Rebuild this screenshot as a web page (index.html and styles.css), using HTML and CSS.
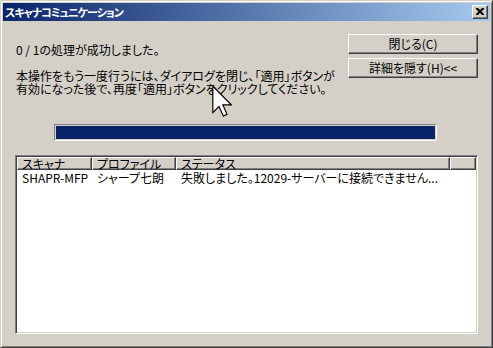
FILE: index.html
```html
<!DOCTYPE html>
<html lang="ja">
<head>
<meta charset="utf-8">
<link rel="stylesheet" href="styles.css">
</head>
<body>
<div class="window">
  <div class="titlebar">
    <span class="title">スキャナコミュニケーション</span>
    <span class="closebtn"><svg width="8" height="7" viewBox="0 0 8 7"><path d="M0 0h2l2 2 2-2h2v1l-2.5 2.5L8 6v1H6L4 5 2 7H0V6l2.5-2.5L0 1z" fill="#000"/></svg></span>
  </div>
  <div class="body">
    <div class="top">
      <div class="message">
        <p class="line first">0 / 1の処理が成功しました。</p>
        <p class="line">本操作をもう一度行うには、ダイアログを閉じ、「適用」ボタンが<br>有効になった後で、再度「適用」ボタンをクリックしてください。</p>
      </div>
      <div class="buttons">
        <div class="btn">閉じる(C)</div>
        <div class="btn">詳細を隠す(H)&lt;&lt;</div>
      </div>
    </div>
    <div class="progress"><div class="fill"></div></div>
    <div class="list">
      <div class="header">
        <div class="hcell c1">スキャナ</div>
        <div class="hcell c2">プロファイル</div>
        <div class="hcell c3">ステータス</div>
        <div class="hcell c4"></div>
      </div>
      <div class="row">
        <div class="cell c1">SHAPR-MFP</div>
        <div class="cell c2">シャープ七朗</div>
        <div class="cell c3">失敗しました。12029-サーバーに接続できません...</div>
      </div>
    </div>
  </div>
  <svg class="cursor" width="20" height="32" viewBox="0 0 12 19"><path d="M0.5 0.5V16.5L4.2 12.8L6.8 18.5L9 17.5L6.5 11.8H11.5Z" fill="#fff" stroke="#000" stroke-width="0.7" stroke-linejoin="miter"/></svg>
</div>
</body>
</html>
```
FILE: styles.css
```css
html, body {
  margin: 0;
  padding: 0;
  background: #d4d0c8;
}
body {
  font-family: "Noto Sans CJK JP", "Noto Sans", sans-serif;
  font-size: 12px;
  color: #000;
  font-feature-settings: "palt";
}
.window {
  position: relative;
  width: 493px;
  height: 348px;
  box-sizing: border-box;
  border: 1px solid;
  border-color: #d4d0c8 #404040 #404040 #d4d0c8;
  box-shadow: inset 1px 1px #fff, inset -1px -1px #808080;
  padding: 2px;
  display: flex;
  flex-direction: column;
  overflow: hidden;
}
.titlebar {
  height: 18px;
  flex: none;
  background: linear-gradient(to right, #0a246a, #a6caf0);
  display: flex;
  align-items: center;
  justify-content: space-between;
  padding: 0 2px 0 2px;
}
.title {
  color: #fff;
  font-weight: bold;
  font-size: 11px;
  letter-spacing: -1px;
  line-height: 18px;
  white-space: nowrap;
}
.closebtn {
  width: 16px;
  height: 14px;
  box-sizing: border-box;
  border: 1px solid;
  border-color: #fff #404040 #404040 #fff;
  box-shadow: inset -1px -1px #808080;
  background: #d4d0c8;
  display: flex;
  align-items: center;
  justify-content: center;
}
.closebtn svg { display: block; margin: 0 1px 1px 0; }
.body {
  flex: 1;
  display: flex;
  flex-direction: column;
  padding: 0 12px 11px 12px;
  min-height: 0;
}
.top {
  display: flex;
  justify-content: space-between;
  align-items: flex-start;
}
.message {
  padding: 22px 0 0 1px;
}
.line {
  margin: 0;
  line-height: 13px;
  white-space: nowrap;
}
.line.first {
  margin-bottom: 13px;
}
.buttons {
  margin-top: 13px;
  display: flex;
  flex-direction: column;
  gap: 4px;
}
.btn {
  width: 130px;
  height: 20px;
  box-sizing: border-box;
  border: 1px solid;
  border-color: #fff #404040 #404040 #fff;
  box-shadow: inset -1px -1px #808080;
  display: flex;
  align-items: center;
  justify-content: center;
  line-height: 1;
  white-space: nowrap;
}
.progress {
  margin: 29px 0 0 39px;
  width: 383px;
  height: 17px;
  box-sizing: border-box;
  border: 1px solid;
  border-color: #808080 #fff #fff #808080;
  padding: 1px;
}
.fill {
  height: 100%;
  background: #0a246a;
}
.list {
  margin-top: 14px;
  flex: 1;
  box-sizing: border-box;
  border: 1px solid;
  border-color: #808080 #fff #fff #808080;
  box-shadow: inset 1px 1px #404040, inset -1px -1px #d4d0c8;
  padding: 1px;
  background: #fff;
  display: flex;
  flex-direction: column;
}
.header {
  display: flex;
  height: 13px;
  flex: none;
  background: #d4d0c8;
}
.hcell {
  box-sizing: border-box;
  border: 1px solid;
  border-color: #fff #404040 #404040 #fff;
  box-shadow: inset -1px -1px #808080;
  padding-left: 4px;
  line-height: 11px;
  white-space: nowrap;
}
.c1 { width: 75px; flex: none; }
.c2 { width: 84px; flex: none; }
.c3 { width: 274px; flex: none; }
.c4 { flex: 1; }
.row {
  display: flex;
  height: 15px;
  flex: none;
  align-items: center;
}
.cell {
  box-sizing: border-box;
  padding-left: 5px;
  white-space: nowrap;
  overflow: hidden;
  line-height: 15px;
}
.cursor {
  position: absolute;
  left: 211px;
  top: 84px;
}
```
